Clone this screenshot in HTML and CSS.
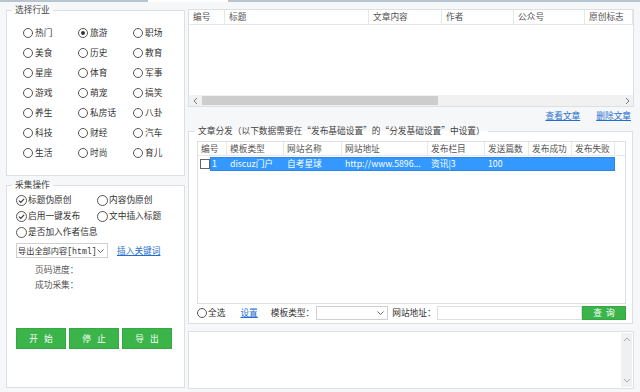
FILE: index.html
```html
<!DOCTYPE html>
<html lang="zh-CN">
<head>
    <meta charset="UTF-8">
    <meta name="viewport" content="width=device-width, initial-scale=1.0">
    <title>文章采集发布</title>
    <link rel="stylesheet" href="styles.css">
</head>
<body>

    <div class="tab-line"><span class="seg"></span><span class="gap"></span><span class="rest"></span></div>

    <div class="main">
        <div class="side">
            <fieldset class="group industry">
                <legend>选择行业</legend>
                <div class="radio-grid">
                    <label class="opt"><span class="radio"></span>热门</label>
                    <label class="opt"><span class="radio on"></span>旅游</label>
                    <label class="opt"><span class="radio"></span>职场</label>
                    <label class="opt"><span class="radio"></span>美食</label>
                    <label class="opt"><span class="radio"></span>历史</label>
                    <label class="opt"><span class="radio"></span>教育</label>
                    <label class="opt"><span class="radio"></span>星座</label>
                    <label class="opt"><span class="radio"></span>体育</label>
                    <label class="opt"><span class="radio"></span>军事</label>
                    <label class="opt"><span class="radio"></span>游戏</label>
                    <label class="opt"><span class="radio"></span>萌宠</label>
                    <label class="opt"><span class="radio"></span>搞笑</label>
                    <label class="opt"><span class="radio"></span>养生</label>
                    <label class="opt"><span class="radio"></span>私房话</label>
                    <label class="opt"><span class="radio"></span>八卦</label>
                    <label class="opt"><span class="radio"></span>科技</label>
                    <label class="opt"><span class="radio"></span>财经</label>
                    <label class="opt"><span class="radio"></span>汽车</label>
                    <label class="opt"><span class="radio"></span>生活</label>
                    <label class="opt"><span class="radio"></span>时尚</label>
                    <label class="opt"><span class="radio"></span>育儿</label>
                </div>
            </fieldset>

            <fieldset class="group collect">
                <legend>采集操作</legend>
                <div class="collect-body">
                    <div class="check-grid">
                        <label class="opt">
                            <svg class="tick" viewBox="0 0 11 11" width="11" height="11"><circle cx="5.5" cy="5.5" r="5" fill="#fff" stroke="#555"/><path d="M3 5.6 L4.8 7.4 L8.1 3.8" fill="none" stroke="#333" stroke-width="1.1"/></svg>标题伪原创
                        </label>
                        <label class="opt"><span class="radio big"></span>内容伪原创</label>
                        <label class="opt">
                            <svg class="tick" viewBox="0 0 11 11" width="11" height="11"><circle cx="5.5" cy="5.5" r="5" fill="#fff" stroke="#555"/><path d="M3 5.6 L4.8 7.4 L8.1 3.8" fill="none" stroke="#333" stroke-width="1.1"/></svg>启用一键发布
                        </label>
                        <label class="opt"><span class="radio big"></span>文中插入标题</label>
                        <label class="opt wide"><span class="radio big"></span>是否加入作者信息</label>
                    </div>

                    <div class="export-row">
                        <div class="combo export">
                            <span class="combo-text">导出全部内容<span class="mono">[html]</span></span>
                            <svg class="caret" viewBox="0 0 7 4" width="7" height="4"><path d="M0.5 0.5 L3.5 3.5 L6.5 0.5" fill="none" stroke="#666"/></svg>
                        </div>
                        <a class="link">插入关键词</a>
                    </div>

                    <div class="stat first">页码进度：</div>
                    <div class="stat">成功采集：</div>

                    <div class="actions">
                        <button type="button" class="btn">开 始</button>
                        <button type="button" class="btn">停 止</button>
                        <button type="button" class="btn">导 出</button>
                    </div>
                </div>
            </fieldset>
        </div>

        <div class="content">
            <div class="grid-panel">
                <div class="grid-head">
                    <span class="hc c-no">编号</span>
                    <span class="hc c-title">标题</span>
                    <span class="hc c-text">文章内容</span>
                    <span class="hc c-author">作者</span>
                    <span class="hc c-account">公众号</span>
                    <span class="hc c-orig">原创标志</span>
                </div>
                <div class="grid-body"></div>
                <div class="hscroll">
                    <span class="arrow"><svg viewBox="0 0 5 8" width="5" height="8"><path d="M4 1 L1 4 L4 7" fill="none" stroke="#777"/></svg></span>
                    <span class="track"><span class="thumb"></span></span>
                    <span class="arrow"><svg viewBox="0 0 5 8" width="5" height="8"><path d="M1 1 L4 4 L1 7" fill="none" stroke="#777"/></svg></span>
                </div>
            </div>

            <div class="grid-links">
                <a class="link">查看文章</a>
                <a class="link">删除文章</a>
            </div>

            <fieldset class="group dispatch">
                <legend>文章分发（以下数据需要在“发布基础设置”的“分发基础设置”中设置）</legend>
                <div class="dispatch-body">
                    <div class="site-table">
                        <div class="site-head">
                            <span class="sh s-no">编号</span>
                            <span class="sh s-type">模板类型</span>
                            <span class="sh s-name">网站名称</span>
                            <span class="sh s-url">网站地址</span>
                            <span class="sh s-col">发布栏目</span>
                            <span class="sh s-count">发送篇数</span>
                            <span class="sh s-ok">发布成功</span>
                            <span class="sh s-fail">发布失败</span>
                        </div>
                        <div class="site-row">
                            <span class="box"></span>
                            <div class="sel">
                                <span class="sc s-id">1</span>
                                <span class="sc s-type">discuz门户</span>
                                <span class="sc s-name">自考星球</span>
                                <span class="sc s-url">http://www.5896...</span>
                                <span class="sc s-col">资讯|3</span>
                                <span class="sc s-count">100</span>
                                <span class="sc s-ok"></span>
                                <span class="sc s-fail"></span>
                            </div>
                        </div>
                    </div>

                    <div class="filter-row">
                        <span class="radio"></span><span class="all">全选</span>
                        <a class="link set">设置</a>
                        <span class="lbl type-lbl">模板类型：</span>
                        <div class="combo type">
                            <span></span>
                            <svg class="caret" viewBox="0 0 7 4" width="7" height="4"><path d="M0.5 0.5 L3.5 3.5 L6.5 0.5" fill="none" stroke="#666"/></svg>
                        </div>
                        <span class="lbl url-lbl">网站地址：</span>
                        <div class="field"></div>
                        <button type="button" class="btn query">查 询</button>
                    </div>
                </div>
            </fieldset>

            <div class="log">
                <div class="vscroll">
                    <svg viewBox="0 0 8 5" width="8" height="5"><path d="M1 4 L4 1 L7 4" fill="none" stroke="#aaa"/></svg>
                    <svg viewBox="0 0 8 5" width="8" height="5"><path d="M1 1 L4 4 L7 1" fill="none" stroke="#aaa"/></svg>
                </div>
            </div>
        </div>
    </div>

</body>
</html>
```

FILE: styles.css
```css
/* Estilos generales */
* {
    box-sizing: border-box;
}

body {
    margin: 0;
    width: 640px;
    height: 392px;
    overflow: hidden;
    background-color: #f6f7f9;
    font-family: "Noto Sans CJK SC", "Noto Sans", sans-serif;
    font-size: 8.7px;
    line-height: 12px;
    color: #333;
}

/* Linea de pestañas */
.tab-line {
    display: flex;
    height: 2px;
}

    .tab-line .seg {
        width: 148px;
        background-color: #b8c5cf;
    }

    .tab-line .gap {
        width: 80px;
        background-color: #fff;
    }

    .tab-line .rest {
        flex: 1;
        background-color: #b8c5cf;
    }

.main {
    display: flex;
    gap: 3px;
    padding-left: 6px;
}

.side {
    width: 179px;
}

/* Grupos */
.group {
    margin: 0;
    padding: 0;
    min-width: 0;
    border: 1px solid #dcdfe3;
    background-color: #fff;
}

    .group legend {
        margin-left: 5px;
        padding: 0 3px;
        line-height: 14px;
        color: #444;
    }

.opt {
    display: flex;
    align-items: center;
    white-space: nowrap;
}

.radio {
    position: relative;
    flex: none;
    width: 10px;
    height: 10px;
    margin-right: 2px;
    border: 1px solid #555;
    border-radius: 50%;
    background-color: #fff;
}

    .radio.big {
        width: 11px;
        height: 11px;
        margin-right: 1px;
    }

    .radio.on::after {
        content: "";
        position: absolute;
        left: 2px;
        top: 2px;
        width: 4px;
        height: 4px;
        border-radius: 50%;
        background-color: #333;
    }

.tick {
    flex: none;
    margin-right: 1px;
}

/* Selección de industria */
.industry {
    margin-top: 1px;
}

.radio-grid {
    display: grid;
    grid-template-columns: repeat(3, 55px);
    grid-auto-rows: 20px;
    padding: 6px 0 12px 16px;
}

/* Operaciones de captura */
.collect {
    margin-top: 2px;
}

.collect-body {
    padding: 0 0 38px 9px;
}

.check-grid {
    display: grid;
    grid-template-columns: 81px 81px;
    grid-auto-rows: 16px;
}

    .check-grid .wide {
        grid-column: span 2;
    }

.export-row {
    display: flex;
    align-items: center;
    margin-top: 3px;
    height: 15px;
}

.combo {
    display: flex;
    align-items: center;
    justify-content: space-between;
    height: 15px;
    border: 1px solid #cdd0d4;
    background-color: #fff;
    white-space: nowrap;
}

    .combo .caret {
        flex: none;
        margin-right: 3px;
    }

.combo-text {
    overflow: hidden;
    font-size: 8.2px;
}

.export {
    width: 92px;
    padding-left: 1px;
}

.mono {
    font-family: "Liberation Mono", monospace;
    font-size: 8.2px;
}

.link {
    color: #1f6fd0;
    text-decoration: underline;
    cursor: pointer;
}

.export-row .link {
    margin-left: 9px;
}

.stat {
    height: 15px;
    line-height: 15px;
    padding-left: 19px;
    color: #555;
}

    .stat.first {
        margin-top: 4px;
    }

.actions {
    display: flex;
    gap: 3px;
    margin-top: 36px;
}

.btn {
    width: 50px;
    height: 21px;
    padding: 0;
    font: inherit;
    color: #fff;
    word-spacing: 4px;
    background-color: #3bb44a;
    border: 1px solid #33a843;
    cursor: pointer;
}

/* Panel derecho */
.content {
    width: 446px;
    padding-top: 7px;
}

.grid-panel {
    display: flex;
    flex-direction: column;
    height: 98px;
    border: 1px solid #dcdfe3;
    background-color: #fff;
}

.grid-head {
    display: flex;
    height: 15px;
    border-bottom: 1px solid #e6e7e9;
    color: #555;
}

.hc {
    flex: none;
    padding-left: 4px;
    line-height: 14px;
    border-right: 1px solid #e6e7e9;
}

.c-no { width: 36px; }
.c-title { width: 144px; }
.c-text { width: 73px; }
.c-author { width: 72px; }
.c-account { width: 71px; }
.c-orig { width: 48px; }

.grid-body {
    flex: 1;
}

.hscroll {
    display: flex;
    height: 11px;
    background-color: #f1f1f1;
}

    .hscroll .arrow {
        display: flex;
        align-items: center;
        justify-content: center;
        width: 12px;
    }

    .hscroll .track {
        flex: 1;
        display: flex;
        align-items: center;
    }

    .hscroll .thumb {
        width: 236px;
        height: 9px;
        margin-left: 1px;
        background-color: #cdcdcd;
    }

.grid-links {
    display: flex;
    justify-content: flex-end;
    align-items: center;
    gap: 16px;
    height: 17px;
    padding-right: 3px;
}

/* Distribución de artículos */
.dispatch {
    margin-right: 1px;
}

    .dispatch legend {
        margin-left: 6px;
    }

.dispatch-body {
    padding: 3px 6px 3px 8px;
}

.site-table {
    height: 163px;
    border: 1px solid #dcdfe3;
    background-color: #fff;
}

.site-head {
    display: flex;
    height: 14px;
    border-bottom: 1px solid #e6e7e9;
    color: #555;
}

.sh {
    flex: none;
    padding-left: 3px;
    line-height: 13px;
    border-right: 1px solid #e6e7e9;
}

.s-no { width: 29px; }
.s-id { width: 17px; }
.s-type { width: 57px; }
.s-name { width: 58px; }
.s-url { width: 86px; }
.s-col { width: 57px; }
.s-count { width: 44px; }
.s-ok { width: 43px; }
.s-fail { width: 43px; }

.site-row {
    display: flex;
    align-items: center;
    height: 14px;
    margin-top: 1px;
}

    .site-row .box {
        width: 10px;
        height: 10px;
        margin-left: 2px;
        border: 1px solid #666;
        background-color: #fff;
    }

.sel {
    display: flex;
    height: 14px;
    background-color: #3399ff;
    box-shadow: inset 0 0 0 1px #2d86e2;
    color: #fff;
}

.sc {
    flex: none;
    padding-left: 3px;
    line-height: 14px;
    white-space: nowrap;
    overflow: hidden;
}

    .sc.s-id {
        padding-left: 2px;
    }

.filter-row {
    display: flex;
    align-items: center;
    height: 14px;
    margin-top: 2px;
}

    .filter-row .all {
        margin-left: -1px;
    }

    .filter-row .set {
        margin-left: 15px;
    }

.type-lbl {
    margin-left: 13px;
}

.combo.type {
    width: 72px;
    height: 14px;
    margin-left: 2px;
}

.url-lbl {
    margin-left: 4px;
}

.field {
    flex: 1;
    height: 14px;
    margin-left: 1px;
    border: 1px solid #dcdfe3;
    background-color: #fff;
}

.btn.query {
    width: 44px;
    height: 14px;
    word-spacing: 2px;
}

/* Registro inferior */
.log {
    display: flex;
    justify-content: flex-end;
    height: 58px;
    margin-top: 7px;
    padding: 1px;
    border: 1px solid #dcdfe3;
    background-color: #fff;
}

.vscroll {
    display: flex;
    flex-direction: column;
    justify-content: space-between;
    align-items: center;
    width: 11px;
    padding: 4px 0;
    background-color: #f0f0f0;
}
```
